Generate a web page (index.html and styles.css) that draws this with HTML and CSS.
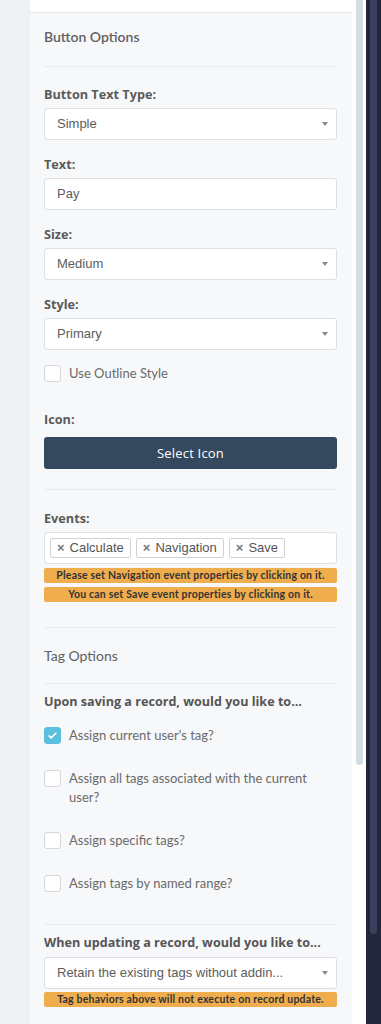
FILE: index.html
```html
<!DOCTYPE html>
<html lang="en">
<head>
  <meta charset="UTF-8">
  <meta name="viewport" content="width=device-width, initial-scale=1.0">
  <title>Button Options</title>
  <link rel="stylesheet" href="styles.css">
</head>
<body>

<div class="backdrop"></div>

<aside class="panel">
  <div class="panel-head"></div>
  <div class="panel-body">
    <h3 class="section-title">Button Options</h3>

    <div class="field field-first">
      <label class="field-label">Button Text Type:</label>
      <div class="select">Simple</div>
    </div>

    <div class="field">
      <label class="field-label">Text:</label>
      <div class="input">Pay</div>
    </div>

    <div class="field">
      <label class="field-label">Size:</label>
      <div class="select">Medium</div>
    </div>

    <div class="field">
      <label class="field-label">Style:</label>
      <div class="select">Primary</div>
    </div>

    <div class="check-row check-outline">
      <span class="checkbox"></span>
      <span class="check-text">Use Outline Style</span>
    </div>

    <div class="field field-icon">
      <label class="field-label">Icon:</label>
      <button class="icon-button">Select Icon</button>
    </div>

    <div class="divider"></div>

    <div class="field field-events">
      <label class="field-label">Events:</label>
      <div class="tag-box">
        <span class="tag"><span class="tag-x">&times;</span>Calculate</span>
        <span class="tag"><span class="tag-x">&times;</span>Navigation</span>
        <span class="tag"><span class="tag-x">&times;</span>Save</span>
      </div>
      <div class="warning">Please set Navigation event properties by clicking on it.</div>
      <div class="warning warning-second">You can set Save event properties by clicking on it.</div>
    </div>

    <h3 class="section-title section-tags">Tag Options</h3>

    <div class="question">Upon saving a record, would you like to...</div>

    <div class="check-list">
      <div class="check-row">
        <span class="checkbox checked">
          <svg viewBox="0 0 16 16" width="11" height="11"><path d="M3 8.5l3 3 7-7" fill="none" stroke="#fff" stroke-width="2.2" stroke-linecap="round" stroke-linejoin="round"/></svg>
        </span>
        <span class="check-text">Assign current user's tag?</span>
      </div>
      <div class="check-row">
        <span class="checkbox"></span>
        <span class="check-text">Assign all tags associated with the current user?</span>
      </div>
      <div class="check-row">
        <span class="checkbox"></span>
        <span class="check-text">Assign specific tags?</span>
      </div>
      <div class="check-row">
        <span class="checkbox"></span>
        <span class="check-text">Assign tags by named range?</span>
      </div>
    </div>

    <div class="divider divider-update"></div>

    <div class="question">When updating a record, would you like to...</div>
    <div class="select select-update">Retain the existing tags without addin...</div>
    <div class="warning warning-update">Tag behaviors above will not execute on record update.</div>
  </div>
</aside>

<div class="gutter"><div class="gutter-thumb"></div></div>

<div class="sidebar"><div class="sidebar-thumb"></div></div>

</body>
</html>
```

FILE: styles.css
```css
body {
  margin: 0;
  height: 1024px;
  overflow: hidden;
  display: flex;
  background-color: #eef1f4;
  font-family: "Open Sans", sans-serif;
}

.backdrop {
  width: 30px;
  flex: none;
}

/* Panel */
.panel {
  width: 322px;
  flex: none;
  background-color: #f7f8fa;
}

.panel-head {
  height: 12px;
  background-color: #fff;
  border-bottom: 1px solid #e1e4e8;
}

.panel-body {
  padding: 0 15px 0 14px;
}

.section-title {
  margin: 0;
  padding: 14px 0 19px;
  font-family: "Lato", sans-serif;
  font-size: 14px;
  font-weight: 600;
  line-height: 20px;
  color: #5e6064;
  border-bottom: 1px solid #e8eaed;
}

.section-tags {
  margin-top: 25px;
  padding: 18px 0 17px;
  font-weight: 400;
  border-top: 1px solid #e8eaed;
}

.field {
  margin-top: 15px;
}

.field-first {
  margin-top: 18px;
}

.field-label {
  display: block;
  font-size: 12.7px;
  font-weight: 700;
  line-height: 18px;
  color: #5a5a5a;
  margin-bottom: 5px;
}

.select,
.input {
  position: relative;
  height: 32px;
  box-sizing: border-box;
  padding: 0 12px;
  background-color: #fff;
  border: 1px solid #dcdfe3;
  border-radius: 3px;
  font-family: "Liberation Sans", Arial, sans-serif;
  font-size: 13px;
  line-height: 30px;
  color: #5c5c5c;
}

/* caret */
.select::after {
  content: "";
  position: absolute;
  right: 8px;
  top: 13px;
  border-left: 3px solid transparent;
  border-right: 3px solid transparent;
  border-top: 4px solid #888;
}

.check-row {
  display: flex;
  align-items: flex-start;
  font-family: "Lato", sans-serif;
  font-size: 13px;
  line-height: 19px;
  color: #6a6a6a;
}

.check-outline {
  margin-top: 14px;
}

.checkbox {
  flex: none;
  width: 17px;
  height: 17px;
  margin: 1px 8px 0 0;
  box-sizing: border-box;
  background-color: #fff;
  border: 1px solid #d3d6da;
  border-radius: 3px;
  display: flex;
  align-items: center;
  justify-content: center;
}

.checkbox.checked {
  background-color: #5bc0de;
  border-color: #5bc0de;
}

.field-icon {
  margin-top: 27px;
}

.field-icon .field-label {
  margin-bottom: 9px;
}

.icon-button {
  display: block;
  width: 100%;
  height: 32px;
  border: none;
  border-radius: 3px;
  background-color: #34495e;
  color: #fff;
  font-family: "Open Sans", sans-serif;
  font-size: 13px;
  letter-spacing: 0.2px;
  cursor: pointer;
}

.divider {
  margin-top: 20px;
  border-top: 1px solid #e8eaed;
}

.field-events {
  margin-top: 19px;
}

.tag-box {
  height: 32px;
  box-sizing: border-box;
  padding: 5px 5px;
  display: flex;
  gap: 5px;
  background-color: #fff;
  border: 1px solid #dcdfe3;
  border-radius: 3px;
}

.tag {
  height: 20px;
  box-sizing: border-box;
  padding: 0 6px;
  border: 1px solid #cfd2d6;
  border-radius: 2px;
  font-family: "Liberation Sans", Arial, sans-serif;
  font-size: 13px;
  line-height: 18px;
  color: #555;
}

.tag-x {
  font-weight: 700;
  color: #777;
  margin-right: 5px;
}

.warning {
  margin-top: 4px;
  height: 15px;
  background-color: #f0ad4e;
  border-radius: 2px;
  font-family: "Lato", sans-serif;
  font-size: 10.5px;
  font-weight: 700;
  letter-spacing: 0.2px;
  line-height: 15px;
  color: #333;
  text-align: center;
}

.question {
  margin-top: 9px;
  font-size: 12.6px;
  font-weight: 700;
  line-height: 18px;
  color: #555;
}

.check-list {
  margin-top: 15px;
  display: flex;
  flex-direction: column;
  gap: 24px;
}

.divider-update {
  margin-top: 31px;
}

.select-update {
  margin-top: 5px;
}

.warning-update {
  margin-top: 3px;
}

/* Scroll gutters on the right */
.gutter {
  width: 14px;
  flex: none;
  background-color: #fff;
  padding-left: 4px;
  box-sizing: border-box;
}

.gutter-thumb {
  width: 7px;
  height: 765px;
  background-color: #d3dce4;
  border-radius: 0 0 4px 4px;
}

.sidebar {
  width: 15px;
  flex: none;
  background-color: #23263a;
  padding-left: 4px;
  box-sizing: border-box;
}

.sidebar-thumb {
  width: 7px;
  height: 934px;
  background-color: #3c3f5d;
  border-radius: 0 0 4px 4px;
}
```
